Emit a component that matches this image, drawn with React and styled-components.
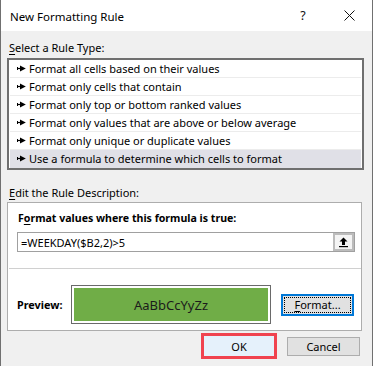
import React from "react";
import styled, { createGlobalStyle } from "styled-components";

const Global = createGlobalStyle`
  html, body { margin: 0; padding: 0; background: #ffffff; }
  body { font-family: "Segoe UI", "Noto Sans", sans-serif; font-size: 11px; color: #000; }
`;

const Window = styled.div`
  width: 373px;
  height: 366px;
  box-sizing: border-box;
  border-left: 1px solid #707070;
  border-right: 1px solid #707070;
  background: #f0f0f0;
  display: flex;
  flex-direction: column;
  overflow: hidden;
`;

const TitleBar = styled.div`
  height: 31px;
  background: #ffffff;
  display: flex;
  align-items: center;
  padding-left: 9px;
  flex-shrink: 0;
`;

const Title = styled.div`
  flex: 1;
  font-size: 11.5px;
  margin-top: 1px;
`;

const TitleButton = styled.div`
  width: 46px;
  height: 31px;
  display: flex;
  align-items: center;
  justify-content: center;
  font-size: 12.5px;
  color: #111;
`;

const Body = styled.div`
  padding: 0 8px 0 6px;
  display: flex;
  flex-direction: column;
`;

const Label = styled.div`
  height: 16px;
  line-height: 16px;
  padding-left: 2px;
  margin-top: ${(p) => p.$top}px;
  margin-bottom: ${(p) => p.$bottom}px;
`;

const U = styled.span`
  text-decoration: underline;
  text-underline-offset: 2px;
`;

const List = styled.div`
  border: 2px solid #6f6f6f;
  background: #ffffff;
  padding: 0 1px;
  display: flex;
  flex-direction: column;
`;

const Row = styled.div`
  height: 17px;
  border-bottom: 1px solid ${(p) => (p.$last ? "transparent" : "#ececec")};
  background: ${(p) => (p.$selected ? "#e0e0e7" : "transparent")};
  display: flex;
  align-items: center;
  gap: 3px;
  padding-left: 7px;
  white-space: nowrap;
`;

const Arrow = () => (
  <svg width="9" height="7" viewBox="0 0 9 7">
    <path d="M0.5 2 V5" stroke="#000" strokeWidth="1" />
    <path d="M0.5 3.5 H4" stroke="#000" strokeWidth="1.2" />
    <path d="M3 0.5 L8.8 3.5 L3 6.5 Z" fill="#000" />
  </svg>
);

const DescBox = styled.div`
  border: 1px solid #adadad;
  background: #ffffff;
  margin-right: 2px;
  display: flex;
  flex-direction: column;
`;

const DescTop = styled.div`
  padding: 7px 6px 16px 8px;
  border-bottom: 1px solid #d0d0d0;
  margin-left: 1px;
  display: flex;
  flex-direction: column;
  gap: 6px;
`;

const Bold = styled.div`
  font-weight: 700;
  font-size: 10.6px;
  height: 16px;
  line-height: 16px;
  padding-left: 1px;
`;

const Input = styled.div`
  height: 18px;
  border: 1px solid #a0a0a0;
  display: flex;
  align-items: stretch;
`;

const InputText = styled.div`
  flex: 1;
  padding-left: 3px;
  display: flex;
  align-items: center;
`;

const CollapseBtn = styled.div`
  width: 17px;
  border: 2px solid #bcbcbc;
  background: #f4f4f4;
  display: flex;
  align-items: center;
  justify-content: center;
`;

const UpIcon = () => (
  <svg width="9" height="11" viewBox="0 0 9 11">
    <path d="M4.5 0.5 L8.5 4.5 H0.5 Z" fill="#000" />
    <rect x="3" y="4" width="3" height="4" fill="#000" />
    <rect x="0" y="9" width="9" height="1.2" fill="#000" />
  </svg>
);

const PreviewRow = styled.div`
  display: flex;
  align-items: center;
  padding: 16px 7px 6px 9px;
`;

const PreviewLabel = styled.div`
  width: 54px;
  font-weight: 700;
  font-size: 10.8px;
`;

const PreviewFrame = styled.div`
  width: 194px;
  height: 33px;
  border: 1px solid #6a6a6a;
  padding: 2px;
  box-sizing: content-box;
  display: flex;
`;

const PreviewFill = styled.div`
  flex: 1;
  background: #70ad47;
  display: flex;
  align-items: center;
  justify-content: center;
  font-family: "Noto Sans", sans-serif;
  font-size: 13px;
  color: #1b1b1b;
`;

const FormatBtn = styled.div`
  margin-left: 10px;
  width: 73px;
  height: 22px;
  box-sizing: border-box;
  border: 2px solid #0078d7;
  background: #e1e1e1;
  padding: 1px;
  display: flex;
`;

const FocusRect = styled.div`
  flex: 1;
  border: 1px dotted #000;
  display: flex;
  align-items: center;
  justify-content: center;
`;

const Buttons = styled.div`
  display: flex;
  justify-content: flex-end;
  align-items: center;
  gap: 10px;
  padding: 2px 4px 0 0;
`;

const Button = styled.div`
  box-sizing: border-box;
  display: flex;
  align-items: center;
  justify-content: center;
  width: ${(p) => (p.$primary ? 76 : 73)}px;
  height: ${(p) => (p.$primary ? 26 : 19)}px;
  border: ${(p) => (p.$primary ? "3px solid #f0434f" : "1px solid #adadad")};
  background: ${(p) => (p.$primary ? "#e5f1fb" : "#e1e1e1")};
  margin-top: ${(p) => (p.$primary ? 0 : 1)}px;
`;

const rules = [
  "Format all cells based on their values",
  "Format only cells that contain",
  "Format only top or bottom ranked values",
  "Format only values that are above or below average",
  "Format only unique or duplicate values",
  "Use a formula to determine which cells to format",
];

export default function App() {
  return (
    <>
      <Global />
      <Window>
        <TitleBar>
          <Title>New Formatting Rule</Title>
          <TitleButton>?</TitleButton>
          <TitleButton>
            <svg width="11" height="11" viewBox="0 0 11 11">
              <path d="M0.5 0.5 L10.5 10.5 M10.5 0.5 L0.5 10.5" stroke="#111" strokeWidth="1" />
            </svg>
          </TitleButton>
        </TitleBar>
        <Body>
          <Label $top={9} $bottom={2}>
            <U>S</U>elect a Rule Type:
          </Label>
          <List>
            {rules.map((r, i) => (
              <Row key={r} $selected={i === 5} $last={i === 5}>
                <Arrow />
                <span>{r}</span>
              </Row>
            ))}
          </List>
          <Label $top={15} $bottom={1}>
            <U>E</U>dit the Rule Description:
          </Label>
          <DescBox>
            <DescTop>
              <Bold>
                F<U>o</U>rmat values where this formula is true:
              </Bold>
              <Input>
                <InputText>=WEEKDAY($B2,2)&gt;5</InputText>
                <CollapseBtn>
                  <UpIcon />
                </CollapseBtn>
              </Input>
            </DescTop>
            <PreviewRow>
              <PreviewLabel>Preview:</PreviewLabel>
              <PreviewFrame>
                <PreviewFill>AaBbCcYyZz</PreviewFill>
              </PreviewFrame>
              <FormatBtn>
                <FocusRect>
                  <span>
                    <U>F</U>ormat...
                  </span>
                </FocusRect>
              </FormatBtn>
            </PreviewRow>
          </DescBox>
          <Buttons>
            <Button $primary>OK</Button>
            <Button>Cancel</Button>
          </Buttons>
        </Body>
      </Window>
    </>
  );
}
